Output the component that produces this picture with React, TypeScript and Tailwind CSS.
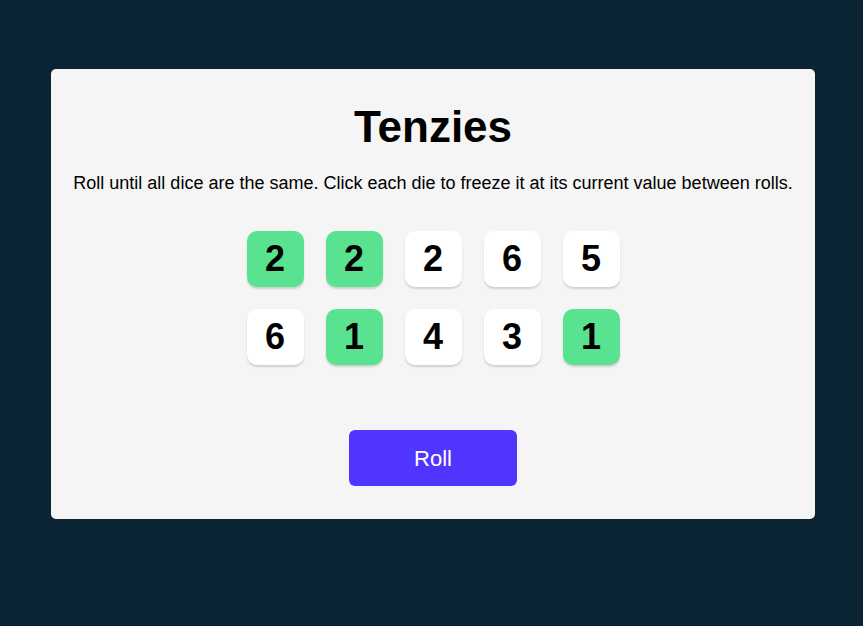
import React from "react";

const dice = [
  { value: 2, held: true },
  { value: 2, held: true },
  { value: 2, held: false },
  { value: 6, held: false },
  { value: 5, held: false },
  { value: 6, held: false },
  { value: 1, held: true },
  { value: 4, held: false },
  { value: 3, held: false },
  { value: 1, held: true },
];

export default function App() {
  return (
    <div className="min-h-[626px] w-full bg-[#0B2434] pt-[69px] pl-[51px] font-['Liberation_Sans',Arial,sans-serif]">
      <main className="w-[764px] h-[450px] bg-[#F5F5F5] rounded-[5px] flex flex-col items-center">
        <h1 className="mt-[33px] text-[44px] leading-[49px] font-bold text-black">
          Tenzies
        </h1>
        <p className="mt-[22px] text-[18px] leading-[20px] text-black text-center">
          Roll until all dice are the same. Click each die to freeze it at its current value between rolls.
        </p>
        <div className="mt-[38px] grid grid-cols-5 gap-x-[22px] gap-y-[22px]">
          {dice.map((d, i) => (
            <button
              key={i}
              className={`w-[57px] h-[56px] rounded-[10px] shadow-[0_2px_2px_rgba(0,0,0,0.15)] flex items-center justify-center text-[36px] font-bold text-black ${d.held ? "bg-[#59E391]" : "bg-white"}`}
            >
              {d.value}
            </button>
          ))}
        </div>
        <button className="mt-[65px] w-[168px] h-[56px] rounded-[6px] bg-[#5035FF] text-white text-[22px]">
          Roll
        </button>
      </main>
    </div>
  );
}
